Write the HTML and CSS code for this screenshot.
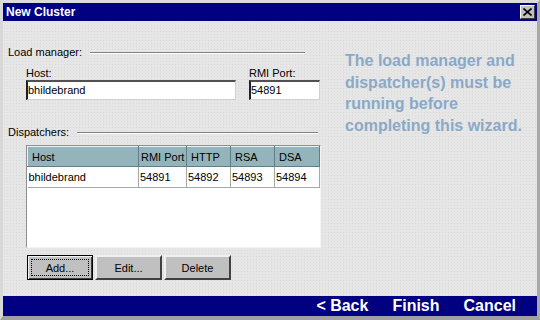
FILE: index.html
```html
<!DOCTYPE html>
<html lang="en">
<head>
    <meta charset="UTF-8">
    <title>New Cluster</title>
    <link rel="stylesheet" href="styles.css">
</head>
<body>
    <div class="window">
        <div class="titlebar">
            <span class="title">New Cluster</span>
            <span class="close">
                <svg width="9" height="8" viewBox="0 0 9 8"><path d="M0.5 0.5 L8.5 7.5 M8.5 0.5 L0.5 7.5" stroke="#000" stroke-width="1.6"/></svg>
            </span>
        </div>

        <div class="content">
            <div class="form">
                <div class="group-head lm">
                    <span>Load manager:</span>
                    <span class="rule"></span>
                </div>
                <div class="fields">
                    <label class="field host">
                        <span>Host:</span>
                        <span class="input">bhildebrand</span>
                    </label>
                    <label class="field port">
                        <span>RMI Port:</span>
                        <span class="input">54891</span>
                    </label>
                </div>

                <div class="group-head disp">
                    <span>Dispatchers:</span>
                    <span class="rule"></span>
                </div>
                <div class="grid">
                    <table>
                        <tr>
                            <th class="c-host">Host</th>
                            <th class="c-rmi">RMI Port</th>
                            <th class="c-num">HTTP</th>
                            <th class="c-num">RSA</th>
                            <th class="c-dsa">DSA</th>
                        </tr>
                        <tr>
                            <td>bhildebrand</td>
                            <td>54891</td>
                            <td>54892</td>
                            <td>54893</td>
                            <td>54894</td>
                        </tr>
                    </table>
                </div>
                <div class="buttons">
                    <button class="btn default"><span class="focus">Add...</span></button>
                    <button class="btn">Edit...</button>
                    <button class="btn">Delete</button>
                </div>
            </div>

            <p class="note">The load manager and dispatcher(s) must be running before completing this wizard.</p>
        </div>

        <div class="footer">
            <span>&lt; Back</span>
            <span>Finish</span>
            <span>Cancel</span>
        </div>
    </div>
</body>
</html>
```

FILE: styles.css
```css
*{
    margin: 0;
    padding: 0;
    box-sizing: border-box;
}
body{
    width: 540px;
    height: 320px;
    font-family: "Liberation Sans", Arial, sans-serif;
    font-size: 11px;
    color: #000;
    background: #c0c0c0;
}
.window{
    width: 540px;
    height: 320px;
    display: flex;
    flex-direction: column;
    border: 3px solid #c8c8c8;
    border-bottom-width: 4px;
    border-top-color: #dcdcdc;
    border-left-color: #d8d8d8;
    border-right-color: #a8a8a8;
    border-bottom-color: #a0a0a0;
}
.titlebar{
    height: 18px;
    background: #000080;
    display: flex;
    align-items: center;
    justify-content: space-between;
    padding: 0 2px 0 3px;
}
.title{
    color: #fff;
    font-weight: bold;
    font-size: 12px;
}
.close{
    width: 15px;
    height: 14px;
    background: #c0c0c0;
    border: 1px solid;
    border-color: #fff #404040 #404040 #fff;
    display: flex;
    align-items: center;
    justify-content: center;
}
.content{
    height: 275px;
    background-color: #e6e6e6;
    background-image: radial-gradient(#dadada 0.6px, transparent 0.7px);
    background-size: 3px 3px;
    display: flex;
}
.form{
    width: 320px;
    padding: 24px 0 0 5px;
}
.group-head{
    display: flex;
    align-items: center;
    height: 14px;
    line-height: 14px;
    gap: 8px;
}
.group-head.lm{
    width: 297px;
}
.group-head.disp{
    width: 310px;
    margin-top: 25px;
}
.rule{
    flex: 1;
    height: 2px;
    border-top: 1px solid #808080;
    border-bottom: 1px solid #fff;
    margin-top: 1px;
}
.fields{
    display: flex;
    gap: 13px;
    padding: 7px 0 0 18px;
}
.field{
    display: flex;
    flex-direction: column;
    line-height: 14px;
}
.input{
    display: block;
    height: 20px;
    line-height: 17px;
    background: #fff;
    border: 2px solid;
    border-color: #202020 #d0d0d0 #d0d0d0 #202020;
    border-top-color: #505050;
    border-right-width: 1px;
    border-bottom-width: 1px;
    padding-left: 0;
}
.host .input{
    width: 210px;
}
.port .input{
    width: 71px;
}
.grid{
    width: 295px;
    height: 103px;
    margin: 6px 0 0 18px;
    background: #fff;
    border: 1px solid;
    border-color: #909090 #f4f4f4 #f4f4f4 #909090;
}
table{
    border-collapse: collapse;
    width: 292px;
    table-layout: fixed;
}
th{
    height: 20px;
    background: #94b4bc;
    font-weight: normal;
    text-align: left;
    padding-left: 4px;
    border-left: 1px solid #e6f2f4;
    border-top: 1px solid #e6f2f4;
    border-right: 1px solid #5f7e86;
    border-bottom: 1px solid #5f7e86;
}
td{
    height: 21px;
    padding-left: 1px;
    border-right: 1px solid #a8a8a8;
    border-bottom: 1px solid #a8a8a8;
}
td:first-child{
    padding-left: 1px;
}
.c-host{ width: 111px; }
.c-rmi{ width: 48px; padding-left: 2px; }
.c-num{ width: 44px; }
.c-dsa{ width: 45px; }
.buttons{
    display: flex;
    gap: 2px;
    margin: 7px 0 0 19px;
}
.btn{
    width: 67px;
    height: 25px;
    font-family: "Liberation Sans", Arial, sans-serif;
    font-size: 11px;
    color: #000;
    background: #c0c0c0;
    border: 2px solid;
    border-color: #f0f0f0 #404040 #404040 #f0f0f0;
}
.btn.default{
    width: 66px;
    border: 1px solid #000;
    box-shadow: inset 1px 1px 0 #f0f0f0, inset -1px -1px 0 #404040;
    padding: 3px;
}
.focus{
    display: flex;
    align-items: center;
    justify-content: center;
    height: 100%;
    border: 1px dotted #000;
}
.note{
    width: 185px;
    margin: 29px 0 0 22px;
    font-size: 16px;
    font-weight: bold;
    line-height: 21.5px;
    color: #8aa9c9;
}
.footer{
    height: 20px;
    background: #000080;
    display: flex;
    justify-content: flex-end;
    align-items: center;
    gap: 24px;
    padding-right: 21px;
    color: #fff;
    font-size: 16px;
    font-weight: bold;
}
```
